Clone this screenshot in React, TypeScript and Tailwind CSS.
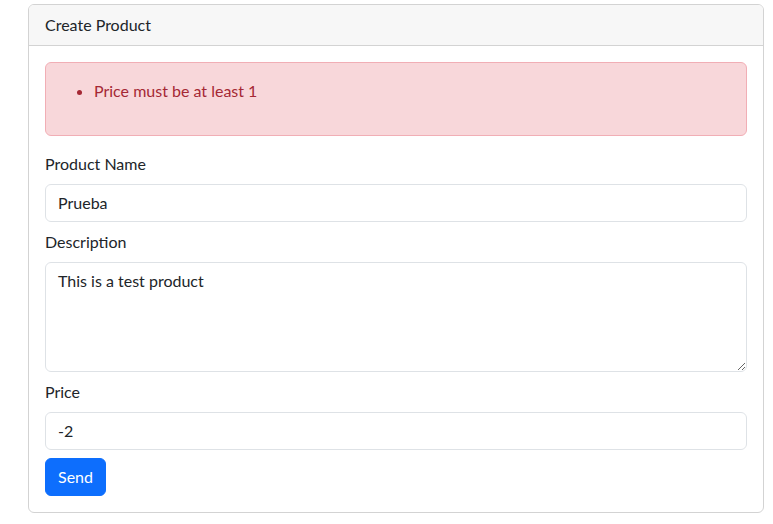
const labelCls = "block text-[16px] leading-[24px] text-[#212529] mb-[8px]";
const inputCls =
  "block w-full border border-[#dee2e6] rounded-[6px] px-[12px] py-[6px] text-[16px] leading-[24px] text-[#212529] bg-white outline-none";

const App = () => {
  return (
    <div className="w-[773px] h-[524px] bg-white pt-[4px] pl-[28px] font-['Segoe_UI','Lato',sans-serif]">
      <div className="w-[736px] border border-[#d3d3d3] rounded-[6px] overflow-hidden">
        <div className="bg-[#f7f7f7] border-b border-[#d3d3d3] px-[16px] py-[8px] text-[16px] leading-[24px] text-[#212529]">
          Create Product
        </div>
        <div className="p-[16px]">
          <div className="bg-[#f8d7da] border border-[#f1aeb5] rounded-[6px] p-[16px] mb-[16px]">
            <ul className="list-disc pl-[32px] mb-[16px] text-[16px] leading-[24px] text-[#a52834] marker:text-[#a52834]">
              <li>Price must be at least 1</li>
            </ul>
          </div>
          <div className="mb-[8px]">
            <label className={labelCls}>Product Name</label>
            <input className={inputCls} defaultValue="Prueba" />
          </div>
          <div className="mb-[8px]">
            <label className={labelCls}>Description</label>
            <textarea
              className={inputCls + " h-[110px] resize-y"}
              defaultValue="This is a test product"
            />
          </div>
          <div className="mb-[8px]">
            <label className={labelCls}>Price</label>
            <input className={inputCls} type="number" defaultValue="-2" />
          </div>
          <button className="bg-[#0d6efd] text-white text-[16px] leading-[24px] px-[12px] py-[6px] rounded-[6px] border border-[#0d6efd]">
            Send
          </button>
        </div>
      </div>
    </div>
  );
};

export default App;
